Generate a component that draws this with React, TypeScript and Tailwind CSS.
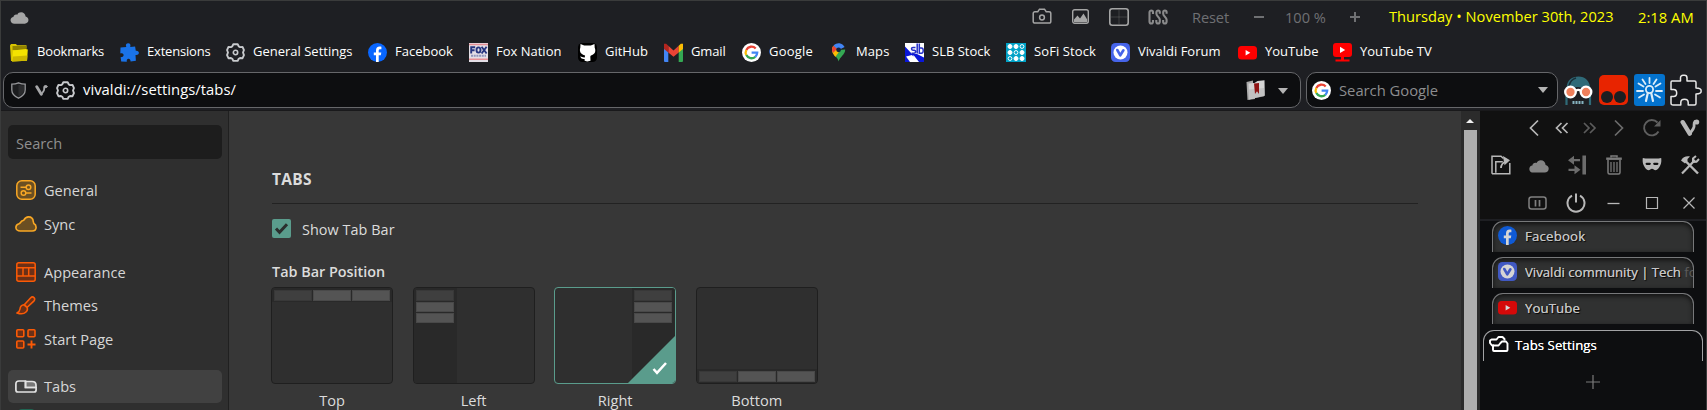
import React from 'react';
import type { ReactNode } from 'react';

type IconProps = { className?: string };

const Cloud = ({ className = '' }: IconProps) => (
  <svg viewBox="0 0 20 13" className={className} fill="currentColor">
    <path d="M4.5 12.6C2 12.6.3 11 .3 8.9c0-1.8 1.3-3.200 3.100-3.400C3.600 3.600 5 2.600 6.500 2.700c.4 0 .8.1 1.100.2C8.400 1.200 9.900.3 11.700.3c2.700 0 4.700 1.900 4.900 4.700 1.800.4 3.100 1.800 3.100 3.700 0 2.200-1.700 3.900-4 3.900z" />
  </svg>
);

const Gear = ({ className = '' }: IconProps) => (
  <svg viewBox="0 0 20 20" className={className} fill="none" stroke="currentColor" strokeWidth="2" strokeLinejoin="round">
    <path d="M7.700 1.300h4.600l1.100 2.300 1.400.7 2.600-.2 1.500 3.300-1 2.600 1 2.800-1.500 3.200-2.600-.2-1.400.8-1.100 2.200H7.700l-1.100-2.200-1.400-.8-2.600.2-1.500-3.200 1-2.800-1-2.600 1.500-3.300 2.600.2 1.400-.7z" />
    <circle cx="10" cy="10" r="2.300" strokeWidth="1.700" />
  </svg>
);

const Facebook = ({ className = '' }: IconProps) => (
  <svg viewBox="0 0 19 19" className={className}>
    <circle cx="9.500" cy="9.500" r="9.500" fill="#0866ff" />
    <path fill="#fff" d="M8 19v-6.800H5.800V9.400H8V7.600C8 4.800 9.300 3.600 11.700 3.600c.6 0 1.300.1 1.700.2v2.500h-1.200c-1.100 0-1.500.5-1.500 1.500v1.600h2.600l-.5 2.800h-2.100V19z" />
  </svg>
);

const VivaldiBadge = ({ className = '' }: IconProps) => (
  <svg viewBox="0 0 19 19" className={className}>
    <rect width="19" height="19" rx="4.500" fill="#4664e9" />
    <circle cx="9.500" cy="9.500" r="7" fill="#fff" />
    <path d="M6.300 7l3 5.300L12.400 7.300" fill="none" stroke="#4664e9" strokeWidth="2.600" strokeLinecap="round" strokeLinejoin="round" />
  </svg>
);

const YouTube = ({ className = '' }: IconProps) => (
  <svg viewBox="0 0 19 19" className={className}>
    <rect y="3" width="19" height="13.400" rx="3.500" fill="#f00" />
    <path d="M7.600 6.900v5.500l4.700-2.750z" fill="#fff" />
  </svg>
);

const GoogleG = ({ className = '' }: IconProps) => (
  <svg viewBox="0 0 19 19" className={className} fill="none" strokeWidth="2.300">
    <circle cx="9.500" cy="9.500" r="9.500" fill="#fff" />
    <path stroke="#ea4335" d="M13.700 5.500A5.800 5.800 0 0 0 4.300 6.900" />
    <path stroke="#fbbc05" d="M4.300 6.900a5.800 5.800 0 0 0 0 5.200" />
    <path stroke="#34a853" d="M4.300 12.100a5.800 5.800 0 0 0 9 1.700" />
    <path stroke="#4285f4" d="M13.300 13.800a5.800 5.800 0 0 0 1.900-4.100H9.600" />
  </svg>
);

const Folder = ({ className = '' }: IconProps) => (
  <svg viewBox="0 0 19 19" className={className}>
    <path d="M0 2.500L1 1h5l1 1.300h9.500V6L3 18H1z" fill="#d8c400" />
    <path d="M2.500 4h13.500M2.500 6h14" stroke="#4a4100" strokeWidth="1" />
    <path d="M3 7.500L15.800 6l2 .5-.8 11.200L2 18.500z" fill="#f4e300" />
    <path d="M3 13.500l14.500-1-.5 5.200L2 18.500z" fill="#cdb800" />
  </svg>
);

const Puzzle = ({ className = '' }: IconProps) => (
  <svg viewBox="0 0 20 19" className={className} fill="#1a73e8">
    <path d="M1.500 4.400l5.800-.3C6.300 1.900 7.300.2 9.200.2c2 0 2.700 1.700 2 3.900l4.900-.6.700 4.300c2.100-.2 3.200.8 3.100 2.300-.2 1.400-1.500 2.100-3.400 1.800l.4 5.800-5.300.7c-.1-1.700-.9-2.700-2.200-2.600-1.300.1-1.900 1.300-1.600 2.900l-5.600-.2-.6-4.300c1.700-.1 3-.8 3-2 0-1.400-1.300-2-3.300-1.800z" />
  </svg>
);

const FoxNation = ({ className = '' }: IconProps) => (
  <svg viewBox="0 0 19 19" className={className}>
    <rect width="19" height="19" fill="#e4dfe6" />
    <path d="M0 1.500h19M0 16.200h19" stroke="#e58f95" strokeWidth="1.600" />
    <g fill="none" stroke="#26357f" strokeWidth="1.900">
      <path d="M2.200 10.500V4.300h4M2.200 7.200h3.400" />
      <ellipse cx="9.500" cy="7" rx="2" ry="2.600" />
      <path d="M12.600 3.700l5 6.800M17.600 3.700l-5 6.800" />
    </g>
    <path d="M2 12.800h15" stroke="#8e95bb" strokeWidth="2" strokeDasharray="2 .7" />
  </svg>
);

const GitHub = ({ className = '' }: IconProps) => (
  <svg viewBox="0 0 19 19" className={className}>
    <rect width="19" height="19" rx="4.500" fill="#000" />
    <path fill="#fff" d="M2.500 1l3.700 1.500h6.600L16.500 1l.2 3.800c1.500 3.700.2 6.800-3.800 7.600l-.6 1.200.2 4.200-3.300.7-2.600-.7v-1.900c-2.200.4-3.200-.3-4.600-2.400 2.100 0 2.500 1.100 4.700.9l.4-2C2.800 11.600 1.100 8.500 2.300 4.800z" />
  </svg>
);

const Gmail = ({ className = '' }: IconProps) => (
  <svg viewBox="0 0 19 19" className={className}>
    <path fill="#4285f4" d="M0 4.500l4.300 3.300V19H1.300C.5 19 0 18.400 0 17.700z" />
    <path fill="#34a853" d="M19 4.500l-4.300 3.300V19h3c.8 0 1.300-.6 1.300-1.300z" />
    <path fill="#ea4335" d="M4.300 2.800l5.200 4.600 5.200-4.600v6.700l-5.200 4.300-5.200-4.300z" />
    <path fill="#b3251e" d="M0 .7h2.200l2.100 2.100v6.700L0 6z" />
    <path fill="#fbbc04" d="M14.700 2.800L16.800.7H19V6l-4.300 3.500z" />
  </svg>
);

const Maps = ({ className = '' }: IconProps) => (
  <svg viewBox="0 0 19 19" className={className}>
    <path d="M9.600 18.600C9.200 14 3 12 3 6.800l6.600.2 6.600-.5c0 5.400-5.700 7.500-6.600 12.100z" fill="#34a853" />
    <path d="M3 6.800c0-1.700.5-3 1.500-4.100L9.600 6.800 6 13C4.300 11 3 9.600 3 6.800z" fill="#fbbc04" />
    <path d="M3 7c0-1.800.5-3.200 1.500-4.300L9 6.300 4.600 10.500C3.500 9.300 3 8.200 3 7z" fill="#ea4335" />
    <path d="M4.500 2.700A6.600 6.600 0 0 1 15.600 4L9.600 7z" fill="#4285f4" />
    <path d="M4 10l3-3 3 2-3.700 5z" fill="#fbbc04" />
    <circle cx="9.600" cy="6.800" r="2.400" fill="#14213a" />
  </svg>
);

const Slb = ({ className = '' }: IconProps) => (
  <svg viewBox="0 0 19 19" className={className}>
    <rect width="19" height="19" fill="#fff" />
    <path d="M0 3.500l7 7.500h5l7 3.500V19H14L8.500 12 7 19H0z" fill="#0a17d8" />
    <path d="M1 13.500l6-1.500L12.500 19H5z" fill="#fff" />
    <path d="M12.200.5v10M10.500 4.500H8c-2 0-2 2.600 0 2.700h1.200c2 0 1.800 3-.2 3H6.500M14.300.5v9.700h2.200c2.300 0 2.300-5.200 0-5.200h-2" fill="none" stroke="#2530c8" strokeWidth="1.500" />
  </svg>
);

const Sofi = ({ className = '' }: IconProps) => (
  <svg viewBox="0 0 20 19" className={className}>
    <rect width="20" height="19" fill="#00a2c7" />
    <g fill="#fff" stroke="#fff" strokeWidth="1">
      <circle cx="4" cy="3.500" r="2" /><circle cx="10" cy="3.500" r="2" /><circle cx="16" cy="3.500" r="1.900" fill="none" />
      <circle cx="4" cy="9.500" r="2" /><circle cx="10" cy="9.500" r="1.900" fill="none" /><circle cx="16" cy="9.500" r="2" />
      <circle cx="4" cy="15.500" r="1.900" fill="none" /><circle cx="10" cy="15.500" r="2" /><circle cx="16" cy="15.500" r="2" />
    </g>
  </svg>
);

const YouTubeTv = ({ className = '' }: IconProps) => (
  <svg viewBox="0 0 19 19" className={className} fill="#f00">
    <rect width="19" height="14" rx="3" />
    <path d="M8 13h3v3.500h5.500v2h-14v-2H8z" />
    <path d="M7 3.800v6.200l5.200-3.100z" fill="#fff" />
  </svg>
);

const VivaldiV = ({ className = '' }: IconProps) => (
  <svg viewBox="0 0 20 18" className={className} fill="none" stroke="currentColor" strokeLinecap="round" strokeLinejoin="round">
    <path d="M2.700 3.200l7 11.500" strokeWidth="4.400" />
    <path d="M10 14.500c1.500-2.500 3.200-3.800 3.900-6.400.6-2-.5-4 .9-5.500" strokeWidth="2.800" />
    <circle cx="16.700" cy="3" r="1.800" fill="currentColor" strokeWidth="1.500" />
  </svg>
);

const bookmarks: { label: string; icon: ReactNode; width: string }[] = [
  { label: 'Bookmarks', icon: <Folder className="size-[19px]" />, width: 'w-[109px] tracking-[-0.15px]' },
  { label: 'Extensions', icon: <Puzzle className="h-[19px] w-5" />, width: 'w-[107px] tracking-[-0.2px]' },
  { label: 'General Settings', icon: <Gear className="size-[19px] text-[#c8cacd]" />, width: 'w-[142px]' },
  { label: 'Facebook', icon: <Facebook className="size-[19px]" />, width: 'w-[101px]' },
  { label: 'Fox Nation', icon: <FoxNation className="size-[19px]" />, width: 'w-[109px]' },
  { label: 'GitHub', icon: <GitHub className="size-[19px]" />, width: 'w-[86px]' },
  { label: 'Gmail', icon: <Gmail className="size-[19px]" />, width: 'w-[78px] tracking-[-0.15px]' },
  { label: 'Google', icon: <GoogleG className="size-[19px]" />, width: 'w-[87px] tracking-[0.2px]' },
  { label: 'Maps', icon: <Maps className="size-[19px]" />, width: 'w-[76px] tracking-[0.1px]' },
  { label: 'SLB Stock', icon: <Slb className="size-[19px]" />, width: 'w-[101px]' },
  { label: 'SoFi Stock', icon: <Sofi className="h-[19px] w-5" />, width: 'w-[105px] tracking-[0.1px]' },
  { label: 'Vivaldi Forum', icon: <VivaldiBadge className="size-[19px]" />, width: 'w-[127px]' },
  { label: 'YouTube', icon: <YouTube className="size-[19px]" />, width: 'w-[95px]' },
  { label: 'YouTube TV', icon: <YouTubeTv className="size-[19px]" />, width: 'w-[110px]' },
];

function StatusRow() {
  return (
    <div className="flex h-[31px] shrink-0 items-center text-[14.6px]">
      <Cloud className="ml-[9px] mt-0.5 h-3 w-[19px] text-[#a5a5a5]" />
      <div className="ml-auto flex items-center text-[#a5a5a5]">
        <svg viewBox="0 0 20 17" className="h-[17px] w-5" fill="none" stroke="currentColor" strokeWidth="1.500">
          <path d="M3 3.700h2.800l1.700-2.500h5l1.700 2.500H17c1.100 0 1.800.7 1.800 1.700v8c0 1-.7 1.700-1.800 1.700H3c-1.100 0-1.800-.7-1.800-1.700v-8c0-1 .7-1.700 1.800-1.700z" />
          <circle cx="10" cy="9.500" r="2.400" />
        </svg>
        <svg viewBox="0 0 17 15" className="ml-5 h-[15px] w-[17px]">
          <rect x=".7" y=".7" width="15.600" height="13.600" rx="2" fill="none" stroke="currentColor" strokeWidth="1.400" />
          <path d="M2 13v-2.500l3.500-4L8 9.500l3.500-5 3.700 6V13z" fill="currentColor" />
        </svg>
        <svg viewBox="0 0 20 18" className="ml-5 h-[18px] w-5" fill="none" stroke="currentColor">
          <rect x=".8" y=".8" width="18.400" height="16.400" rx="2.500" strokeWidth="1.600" />
          <path d="M10 2v14M2 9h16" strokeWidth="1" opacity=".25" />
        </svg>
        <svg viewBox="0 0 20 16" className="ml-[19px] h-4 w-5" fill="none" stroke="currentColor" strokeWidth="2.100" opacity=".8">
          <path d="M5 5V3.300C5 .9 1.500.9 1.500 3.300v9.200c0 2.700 3.500 2.700 3.500 0V11" />
          <path d="M11.800 4.700V3.300c0-2.400-3.400-2.400-3.400 0v1.500c0 2.700 3.400 3.200 3.400 6v1.700c0 2.700-3.500 2.700-3.500 0V11" />
          <path d="M18.600 4.700V3.300c0-2.400-3.400-2.400-3.400 0v1.500c0 2.700 3.400 3.200 3.400 6v1.700c0 2.700-3.500 2.700-3.500 0V11" />
        </svg>
      </div>
      <div className="ml-[24px] flex items-center pt-0.5 text-[#6f7073]">
        <span className="w-[62px] tracking-[-0.1px]">Reset</span>
        <span className="h-[2px] w-[10px] bg-current" />
        <span className="ml-[21px] w-[65px]">100 %</span>
        <svg viewBox="0 0 10 10" className="size-[10px]" stroke="currentColor" strokeWidth="2"><path d="M5 0v10M0 5h10" /></svg>
      </div>
      <span className="ml-[29px] w-[249px] whitespace-nowrap pt-px tracking-[0.03px] text-[#ffff00]">Thursday • November 30th, 2023</span>
      <span className="w-[68px] whitespace-nowrap pt-0.5 text-[14.8px] text-[#ffff00]">2:18 AM</span>
    </div>
  );
}

function AddressRow() {
  return (
    <div className="flex h-9 shrink-0 pl-0.5">
      <div className="flex w-[1298px] items-center rounded-[10px] border border-[#66676a] bg-[#0d0e10]">
        <svg viewBox="0 0 15 17" className="ml-[7px] h-[17px] w-[15px]" strokeWidth="1.300">
          <path d="M.8 2.200C3.500 2.200 5.500 1.700 7.500.8c2 .9 4 1.400 6.700 1.400V8c0 4-3 6.500-6.700 8.200C3.800 14.500.8 12 .8 8z" fill="#1b1c1e" stroke="#96979a" />
          <path d="M7.500 2.500v12C10.500 13 13 11 13 8V3.500c-2 0-4-.3-5.500-1z" fill="#2b2c2e" />
        </svg>
        <VivaldiV className="ml-[9px] h-[13px] w-[13px] text-[#a6a7a9]" />
        <Gear className="ml-2 size-[19px] text-[#c8cacd]" />
        <span className="ml-2 pb-px text-[14.8px] tracking-[0.03px] text-white">vivaldi://settings/tabs/</span>
        <svg viewBox="0 0 19 20" className="ml-auto h-5 w-[19px]">
          <path d="M.5 2L7 .5V3L9 4v15l-7.500 1z" fill="#a9a9a9" />
          <path d="M2.500 3.500l6-.5 3-2 7-.7.3 15.500L3 19.500z" fill="#d4d4d4" />
          <path d="M2.500 9.500L18 8v8.500L3 19z" fill="#b5b5b5" opacity=".6" />
          <path d="M8 3.500l5-.6v11l-2-2.600L9 14z" fill="#8f1414" />
        </svg>
        <svg viewBox="0 0 10 6" className="ml-[13px] mr-[12px] mt-px h-1.5 w-[10px]" fill="#b4b4b4"><path d="M0 0h10L5 6z" /></svg>
      </div>
      <div className="ml-[5px] flex w-[252px] items-center rounded-[10px] border border-[#66676a] bg-[#0d0e10]">
        <GoogleG className="ml-[5px] size-[19px]" />
        <span className="ml-2 pt-px text-[14.8px] tracking-[-0.02px] text-[#8c8d8f]">Search Google</span>
        <svg viewBox="0 0 10 6" className="ml-auto mr-[9px] h-1.5 w-[10px]" fill="#b4b4b4"><path d="M0 0h10L5 6z" /></svg>
      </div>
      <div className="flex items-center pl-[5px]">
        <svg viewBox="0 0 30 32" className="h-8 w-[30px]">
          <path d="M3.500 14C4 6 9 2.500 15.500 2.500S27 7 27.500 15L15 13z" fill="#2f6a78" />
          <path d="M6 12c1-4.500 3.500-7 7-8" stroke="#1a2f38" strokeWidth="1.500" fill="none" />
          <path d="M3.500 22v9M27 22v9" stroke="#2f6a78" strokeWidth="2.200" />
          <path d="M9.500 28.500h12" stroke="#86b3c0" strokeWidth="3" strokeDasharray="2 1" />
          <circle cx="7.500" cy="18" r="5.300" fill="#f0805c" stroke="#fff" strokeWidth="2.300" />
          <circle cx="23" cy="18" r="5.300" fill="#f0805c" stroke="#fff" strokeWidth="2.300" />
          <path d="M12.500 17c1.500-1.200 4-1.200 5.500 0" stroke="#fff" strokeWidth="2" fill="none" />
        </svg>
        <svg viewBox="0 0 29 30" className="ml-1.5 h-[30px] w-[29px]">
          <rect width="29" height="30" rx="5" fill="#e82400" />
          <circle cx="8" cy="22" r="6" fill="#1d1e21" /><circle cx="21" cy="22" r="6" fill="#1d1e21" />
        </svg>
        <svg viewBox="0 0 31 32" className="ml-1.5 h-8 w-[31px]" fill="none" stroke="#dcecf8" strokeWidth="1.800" strokeLinecap="round">
          <rect width="31" height="32" rx="3" fill="#0473ce" stroke="none" />
          <path d="M15.500 9V4M11.500 10L8.500 5.500M19.500 10l3-4.500M9.500 12.500L4.500 9.500M21.500 12.500l5-3M9 17H3M22 17h6M10 20.500l-5 3M21 20.500l5 3" />
          <circle cx="15.500" cy="15.500" r="3.600" />
          <path d="M13.800 19l-1.800 8M17.200 19l1.800 8" strokeWidth="2.200" />
        </svg>
        <svg viewBox="0 0 32 32" className="ml-[5px] h-8 w-8" fill="#15161a" stroke="#e8e8e8" strokeWidth="1.500" strokeLinejoin="round">
          <path d="M2 7h8.500V4c0-1.700 1-2.700 2.500-2.700h1.500c1.600 0 2.500 1 2.500 2.700v3h7.500c1 0 1.500.5 1.500 1.500V14c2.800 0 5.200.8 5.200 3s-2.400 3-5.200 3v9.500c0 1-.5 1.500-1.500 1.500h-6.300v-2.500c0-2-1.400-3.200-3.700-3.200s-3.700 1.200-3.700 3.200V31H3.200C1.700 31 1 30.300 1 29v-6.500h2.500c2 0 3.200-1.400 3.200-3.500s-1.200-3.500-3.200-3.500H1V8.500C1 7.500 1.300 7 2 7z" />
        </svg>
      </div>
    </div>
  );
}

function NavRow({ icon, label, active, gap }: { icon: ReactNode; label: string; active?: boolean; gap?: string }) {
  return (
    <div className={`flex shrink-0 items-center rounded-[5px] pl-[7px] ${active ? 'h-[33px] bg-[#414141]' : 'h-[34px]'} ${gap ?? ''}`}>
      <span className="flex w-[22px] justify-center">{icon}</span>
      <span className="ml-[7px] pt-px text-[14.6px] text-[#d6d6d6]">{label}</span>
    </div>
  );
}

function Sidebar() {
  return (
    <aside className="flex w-[228px] shrink-0 flex-col overflow-hidden border-r border-[#202020] bg-[#2f2f2f] pl-[7px] pr-[6px] pt-[14px]">
      <div className="flex h-[34px] shrink-0 items-center rounded-[5px] bg-[#1d1d1d] pl-2 pt-[3px] text-[14.6px] text-[#8f8f8f]">Search</div>
      <NavRow gap="mt-[14px]" label="General" icon={
        <svg viewBox="0 0 20 20" className="size-5" fill="none" stroke="#f9a825" strokeWidth="1.500">
          <rect x=".8" y=".8" width="18.400" height="18.400" rx="5" fill="#6b4f22" />
          <circle cx="12.500" cy="7.200" r="2.300" /><path d="M4.500 7.200h5.500M10 13h5.500" /><circle cx="7.500" cy="13" r="2.300" />
        </svg>} />
      <NavRow label="Sync" icon={
        <svg viewBox="0 0 22 16" className="h-4 w-[22px]" fill="#6b4f22" stroke="#f9a825" strokeWidth="1.600">
          <path d="M5.200 15C2.600 15 .9 13.500.9 11.500c0-1.700 1-3.100 2.700-3.500C5 7.700 5.600 6.500 6.500 5.200l2.300-1C10 2 11.500.9 13.500.9c3 0 4.600 2 4.800 4.800l.5 1.800c1.500.8 2.300 2 2.300 3.700 0 2.300-1.600 3.800-4 3.800z" />
        </svg>} />
      <NavRow gap="mt-[14px]" label="Appearance" icon={
        <svg viewBox="0 0 20 20" className="size-5" fill="none" stroke="#fb5a06" strokeWidth="1.500">
          <rect x=".8" y=".8" width="18.400" height="18.400" rx="2" fill="#6b3017" />
          <path d="M1 5.700h18M1 14h18M7 6v8M12.700 6v8" strokeWidth="1.500" />
          <path d="M15 7.200h2.800M2 7.200h3.500" stroke="#2f2f2f" strokeWidth="0" />
        </svg>} />
      <NavRow gap="-mt-px" label="Themes" icon={
        <svg viewBox="0 0 20 19" className="h-[19px] w-5" fill="#6b3017" stroke="#fb5a06" strokeWidth="1.600" strokeLinejoin="round">
          <path d="M8.500 8.500L14.500 2c1.200-1.200 2.500-1.300 3.500-.4s.9 2.300-.2 3.500L11 11.500z" />
          <path d="M8 8.800c-3 .2-3.800 2-4 4.200-.2 1.700-1.200 3-3 4 3.500 1.200 7 1 9-1 1.400-1.400 1.800-3 1-4.500z" />
        </svg>} />
      <NavRow label="Start Page" icon={
        <svg viewBox="0 0 20 20" className="size-5" fill="#6b3017" stroke="#fb5a06" strokeWidth="1.600">
          <rect x=".8" y=".8" width="7" height="7" rx="1" /><rect x="12" y=".8" width="7" height="7" rx="1" /><rect x=".8" y="12" width="7" height="7" rx="1" />
          <path d="M15.500 11.500v8M11.500 15.500h8" strokeWidth="1.900" />
        </svg>} />
      <NavRow gap="mt-[14px]" active label="Tabs" icon={
        <svg viewBox="0 0 22 13" className="h-[13px] w-[22px]" fill="none" stroke="#e2e2e2" strokeWidth="1.700">
          <path d="M10.500 1.500H17c2.800 0 4 1 4 3.500V7.500H10.500z" fill="#777" />
          <path d="M10.500 1H4C2 1 .9 2 .9 4v6c0 1.300.7 2 2 2h16.200c1.300 0 2-.7 2-2V7.500H10.500z" />
        </svg>} />
      <div className="ml-2.5 mt-[6px] h-4 w-[17px] shrink-0 rounded bg-[#1f6653]" />
    </aside>
  );
}

function BarTabs() {
  return (
    <div className="flex h-[14px] justify-between bg-[#292929] px-[2px] pt-[2px] pb-px">
      <i className="w-[38px] border border-[#383838] bg-[#3f3f3f]" />
      <i className="w-[38px] border border-[#494949] bg-[#545454]" />
      <i className="w-[38px] border border-[#494949] bg-[#545454]" />
    </div>
  );
}

function SideTabs() {
  return (
    <div className="flex w-[43px] flex-col gap-px bg-[#292929] px-[2px] pt-[2px]">
      <i className="h-[11px] w-[38px] border border-[#383838] bg-[#3f3f3f]" />
      <i className="h-[10px] w-[38px] border border-[#494949] bg-[#545454]" />
      <i className="h-[10px] w-[38px] border border-[#494949] bg-[#545454]" />
    </div>
  );
}

function Position({ label, selected, children }: { label: string; selected?: boolean; children: ReactNode }) {
  return (
    <div className="flex w-[122px] flex-col items-center">
      <div className={`relative flex h-[97px] w-full overflow-hidden rounded-[4px] border bg-[#2f2f2f] ${selected ? 'border-[#5a9c8c]' : 'border-[#1f1f1f]'}`}>
        {children}
        {selected && (
          <svg viewBox="0 0 49 49" className="absolute -bottom-px -right-px size-[49px]">
            <path d="M49 0v49H0z" fill="#5a9c8c" />
            <path d="M26.500 34l3.500 3.800L39 28" fill="none" stroke="#fff" strokeWidth="2.500" />
          </svg>
        )}
      </div>
      <span className="mt-[7px] text-[14.6px] leading-[18px]">{label}</span>
    </div>
  );
}

function Settings() {
  return (
    <main className="flex-1 overflow-hidden bg-[#373737] pl-[43px] text-[14.4px] text-[#dcdcdc]">
      <h1 className="mt-[57px] text-[15.5px] font-bold leading-[22px] tracking-[0.3px]">TABS</h1>
      <hr className="mt-[13px] w-[1146px] border-[#222]" />
      <div className="mt-[15px] flex h-[19px] items-center">
        <svg viewBox="0 0 19 19" className="size-[19px]">
          <rect width="19" height="19" rx="2" fill="#5a9c8c" />
          <path d="M4 9.500l3.500 3.700 7.500-8" fill="none" stroke="#2b2f2e" strokeWidth="3" />
        </svg>
        <span className="ml-[11px] pt-[3px] tracking-[0.06px]">Show Tab Bar</span>
      </div>
      <h2 className="mt-[23px] text-[14.4px] font-semibold leading-[22px]">Tab Bar Position</h2>
      <div className="-ml-px mt-1 flex gap-[19.600px]">
        <Position label="Top"><div className="w-full"><BarTabs /></div></Position>
        <Position label="Left"><SideTabs /></Position>
        <Position label="Right" selected><div className="ml-auto flex"><SideTabs /></div></Position>
        <Position label="Bottom"><div className="w-full self-end"><BarTabs /></div></Position>
      </div>
    </main>
  );
}

function ScrollBar() {
  return (
    <div className="flex w-[19px] shrink-0 flex-col items-center bg-[#2b2b2b]">
      <svg viewBox="0 0 8 4" className="ml-[-1px] mt-[8px] h-1 w-2" fill="#f0f0f0"><path d="M4 0l4 4H0z" /></svg>
      <div className="ml-[-1px] mt-[7px] w-[13px] flex-1 bg-[#aeaeae]" />
    </div>
  );
}

const S20 = ({ children, className = '' }: { children: ReactNode; className?: string }) => (
  <svg viewBox="0 0 20 20" className={`size-5 shrink-0 ${className}`} fill="none" stroke="currentColor" strokeWidth="1.500">{children}</svg>
);

function PanelButtons() {
  return (
    <div className="flex h-[110px] shrink-0 flex-col border-b-2 border-[#1e1f23] bg-[#111] text-[#b8b8b8]">
      <div className="mt-[7px] flex h-5 items-center pl-[44px]">
        <S20><path d="M14 2.500L6.500 10l7.500 7.500" strokeWidth="1.700" /></S20>
        <S20 className="ml-2"><path d="M9.500 5l-5 5 5 5M15.500 5l-5 5 5 5" strokeWidth="1.700" /></S20>
        <S20 className="ml-[7px] text-[#5c5c5c]"><path d="M5 5l5 5-5 5M11 5l5 5-5 5" strokeWidth="1.700" /></S20>
        <S20 className="ml-[10px] text-[#6c6c6c]"><path d="M6 2.500l7.500 7.500L6 17.500" strokeWidth="1.700" /></S20>
        <S20 className="ml-[13px] text-[#5f5f5f]"><path d="M16.500 13.500A7.700 7.700 0 1 1 15.500 4.500" strokeWidth="1.900" /><path d="M18.500 2v6.500H12z" fill="currentColor" stroke="none" /></S20>
        <VivaldiV className="ml-[18px] h-[18px] w-5" />
      </div>
      <div className="mt-[17px] flex h-5 items-center gap-[17.800px] pl-[11px]">
        <S20><path d="M1 18.800V1.200h9l2.500 2.300M1 18.800h17.800V8M4.800 17.800V6.800h7" strokeWidth="1.500" /><path d="M10 13c0-3.500 2-5.500 5.500-7" strokeWidth="1.800" /><path d="M12 1l7 4.200-5.500 5z" fill="currentColor" stroke="none" /></S20>
        <Cloud className="mt-0.5 h-[13px] w-5 shrink-0 text-[#858585]" />
        <S20 className="text-[#6c6c6c]"><path d="M17.200.5v19" strokeWidth="3.600" /><path d="M6 5.200h7M1.500 14.800h7" strokeWidth="2.200" /><path d="M7 .8v9L1 5.200zM7.500 10.300v9l6-4.500z" fill="currentColor" stroke="none" /></S20>
        <S20 className="text-[#7c7c7c]"><path d="M2.200 3.700h15.600" strokeWidth="2.400" /><path d="M7 2.500V1h6v1.500M4 5v12.500c0 1 .5 1.500 1.500 1.500h9c1 0 1.500-.5 1.500-1.500V5" /><path d="M7 7v10M10 7v10M13 7v10" strokeWidth="1.200" /></S20>
        <S20><path d="M.8 3c3 .8 6.500.5 9.200.5S16.200 3.800 19.200 3c.3 2.500.3 5-1 7.500-1.200 2.700-2.700 4.700-4.700 4.700-1.500 0-2-1.500-3.500-1.500s-2 1.500-3.500 1.500c-2 0-3.500-2-4.700-4.700-1.300-2.500-1.300-5-1-7.500z" fill="currentColor" stroke="none" /><path d="M4.700 8.800h3M12.300 8.800h3" stroke="#111" strokeWidth="2.300" strokeLinecap="round" /></S20>
        <S20><path d="M4.500 5L18 18.500" strokeWidth="2.400" /><path d="M15 5L2 18.500" strokeWidth="2.200" /><path d="M1 5.500C3 2 6 .8 10 1.500L7.500 4v2L5 8.500z" fill="currentColor" stroke="none" /><path d="M13 7V3.500L16 1M13 7l3.500-.3L19 4" strokeWidth="2" /></S20>
      </div>
      <div className="mt-[18px] flex h-5 items-center gap-[17.800px] pl-[48.300px]">
        <S20 className="text-[#808080]"><rect x="1" y="4" width="17" height="12" rx="2.500" /><path d="M7.500 7v6.500M11.500 7v6.500" strokeWidth="1.700" /></S20>
        <S20><path d="M6 2.700a8.500 8.500 0 1 0 8 0M10 .5v9" strokeWidth="2" /></S20>
        <S20><path d="M3.500 10.500h12" strokeWidth="1.300" /></S20>
        <S20><path d="M4.500 4.500h11v11h-11z" strokeWidth="1.200" /></S20>
        <S20><path d="M4.500 4.500L15.500 15.500M15.500 4.500L4.500 15.500" strokeWidth="1.200" /></S20>
      </div>
    </div>
  );
}

function Tab({ icon, label }: { icon: ReactNode; label: ReactNode }) {
  return (
    <div className="mx-[12px] mb-[5px] flex h-[31px] shrink-0 items-center overflow-hidden rounded-t-[11px] border border-b-0 border-[#77787a] bg-[#303131] pl-[5px] shadow-[inset_0_2px_5px_#000000b0]">
      <span className="pb-[3px] opacity-80">{icon}</span>
      <span className="ml-2 flex-1 overflow-hidden whitespace-nowrap pb-px text-[13.200px] text-[#c4c4c4] [text-shadow:0_0_0.5px_#bfbfbf,1px_1px_1px_#000]">{label}</span>
    </div>
  );
}

function TabPanel() {
  return (
    <div className="flex w-[226px] shrink-0 flex-col bg-[#0d0e10]">
      <PanelButtons />
      <Tab icon={<Facebook className="size-[19px]" />} label={<span className="tracking-[0.2px]">Facebook</span>} />
      <Tab icon={<VivaldiBadge className="size-[19px]" />} label={<>Vivaldi community | Tech <span className="text-[#5c5c5c] [text-shadow:none]">fo</span></>} />
      <Tab icon={<YouTube className="size-[19px]" />} label={<span className="tracking-[0.1px]">YouTube</span>} />
      <div className="ml-[3px] mr-[3px] mt-px flex h-[31px] shrink-0 items-center rounded-t-[11px] border border-b-0 border-[#a2a3a5] pl-[5px]">
        <svg viewBox="0 0 20 16" className="mb-1 h-4 w-5" fill="none" stroke="#fff" strokeWidth="1.900" strokeLinejoin="round">
          <path d="M5 9.500H3L1 7V4.500L2.500 3.500h5L9.500 1h4L15.500 3v1.500" />
          <path d="M4 14V9.500h5.500l2-2.500 1.500-1.500h4L18.500 7.500V14c0 .6-.4 1-1 1H5c-.6 0-1-.4-1-1z" />
        </svg>
        <span className="ml-[6px] pb-px text-[13.200px] tracking-[0.05px] text-white [text-shadow:0_0_0.6px_#fff]">Tabs Settings</span>
      </div>
      <svg viewBox="0 0 14 14" className="mx-auto mt-[14px] size-[14px]" stroke="#7b7b7b" strokeWidth="1.200"><path d="M7 0v14M0 7h14" /></svg>
    </div>
  );
}

export default function App() {
  return (
    <div className="flex h-[410px] w-[1707px] flex-col overflow-hidden border-x border-t border-[#3a3b3b] bg-[#1e1f23] [font-family:'Open_Sans','Noto_Sans',sans-serif]">
      <StatusRow />
      <div className="flex h-[40px] shrink-0 items-center pl-[9px] text-[13px] text-white">
        {bookmarks.map((b) => (
          <div key={b.label} className={`flex shrink-0 items-center gap-2 whitespace-nowrap ${b.width}`}>
            {b.icon}
            <span>{b.label}</span>
          </div>
        ))}
      </div>
      <AddressRow />
      <div className="mt-[2px] flex min-h-0 flex-1 border-t border-[#19191b]">
        <Sidebar />
        <Settings />
        <ScrollBar />
        <TabPanel />
      </div>
    </div>
  );
}
